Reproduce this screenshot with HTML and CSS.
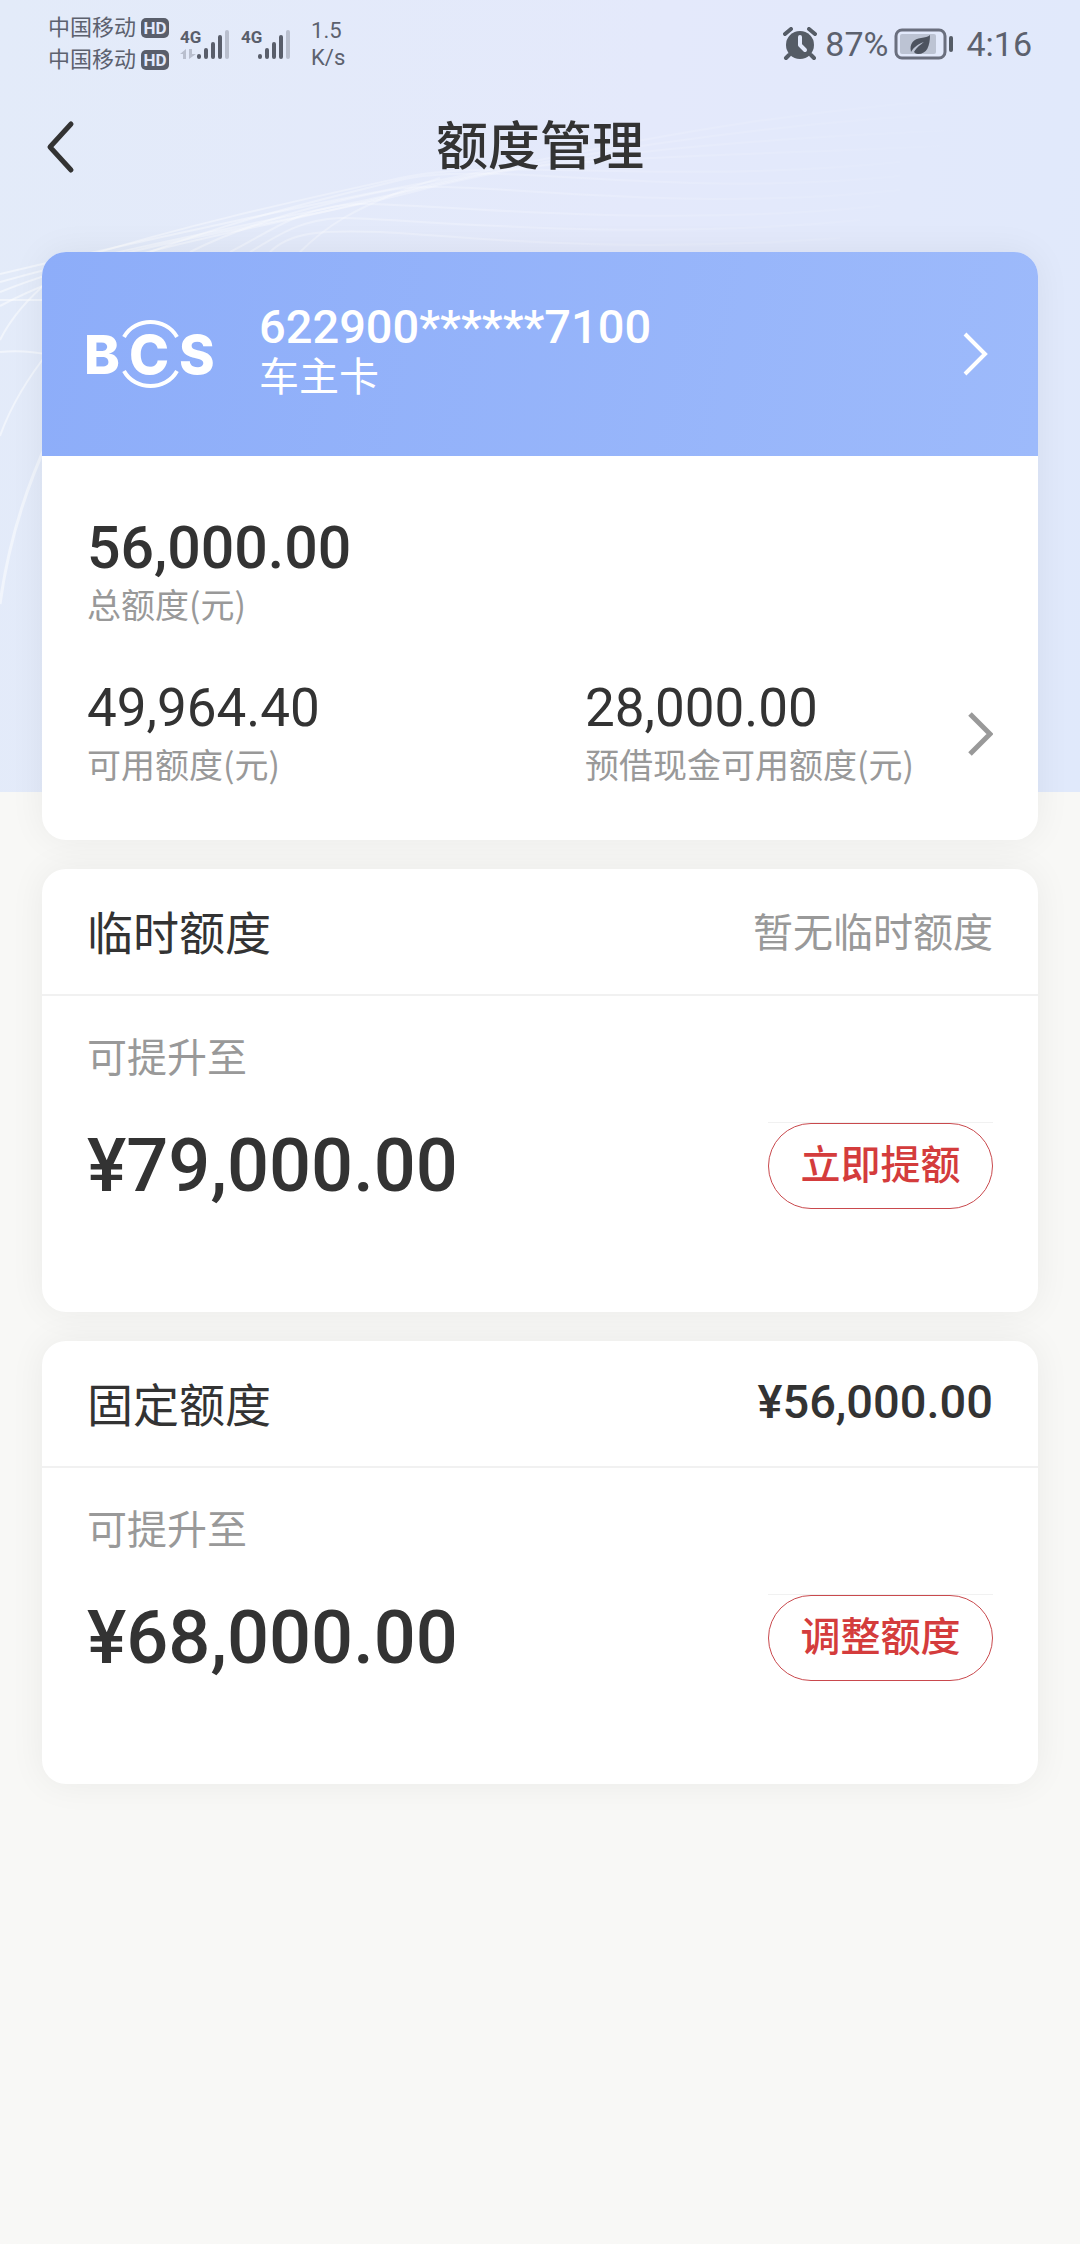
FILE: index.html
```html
<!DOCTYPE html>
<html lang="zh-CN">
<head>
  <meta charset="UTF-8">
  <meta name="viewport" content="width=device-width, initial-scale=1.0">
  <title>额度管理</title>
  <link rel="stylesheet" href="styles.css">
</head>
<body>
  <div class="page">
    <!-- Background waves -->
    <svg class="page-bg" viewBox="0 0 1080 792" preserveAspectRatio="xMinYMin slice" aria-hidden="true">
      <defs>
        <linearGradient id="wave" gradientUnits="userSpaceOnUse" x1="0" y1="0" x2="1000" y2="0">
          <stop offset="0" stop-color="#fff" stop-opacity="0.5"/>
          <stop offset="0.4" stop-color="#fff" stop-opacity="0.25"/>
          <stop offset="1" stop-color="#fff" stop-opacity="0"/>
        </linearGradient>
      </defs>
      <g fill="none" stroke="url(#wave)" stroke-width="2">
        <path d="M0 274 C160 236 330 200 440 180 S760 104 1080 92"/>
        <path d="M0 282 C150 240 320 212 430 186 S740 124 980 112"/>
        <path d="M0 292 C130 240 300 222 420 190 S720 140 960 130"/>
        <path d="M0 306 C110 246 290 226 410 190 S700 158 940 146"/>
        <path d="M60 264 C180 226 300 200 400 178 S660 186 900 162"/>
        <path d="M150 252 C230 222 310 202 400 180 S660 200 900 176"/>
        <path d="M190 252 C250 222 320 204 390 190 S660 216 900 190"/>
        <path d="M230 252 C270 232 300 206 360 204 S640 230 880 206"/>
        <path d="M250 252 C280 234 300 220 340 218 S620 244 860 220"/>
        <path d="M270 252 C290 232 320 230 380 232 S600 256 840 238"/>
        <path d="M300 252 C320 232 350 206 440 178"/>
        <path d="M0 300 H50"/>
        <path d="M0 352 C20 350 36 352 50 355"/>
        <path d="M0 340 C10 320 26 300 50 280"/>
        <path d="M0 436 C10 408 26 380 50 350"/>
        <path d="M0 604 C6 560 20 500 50 436" stroke-width="3"/>
      </g>
    </svg>

    <!-- Status Bar -->
    <div class="status-bar">
      <div class="status-left">
        <div class="carriers">
          <span class="carrier">中国移动<b class="hd">HD</b></span>
          <span class="carrier">中国移动<b class="hd">HD</b></span>
        </div>
        <div class="signals">
          <svg width="52" height="36" viewBox="0 0 52 36" role="img" aria-label="4G">
            <text class="net" x="0" y="17">4G</text>
            <path d="M0 28L6 23V33H3V28ZM9 33V23H12V28H16Z" fill="#b9bfce"/>
            <g stroke="#595e6b" stroke-width="4" stroke-linecap="round">
              <path d="M19 30V31M26 24V31M33 18V31M40 11V31"/>
              <path d="M47 6V31" stroke="#b9bfce"/>
            </g>
          </svg>
          <svg width="52" height="36" viewBox="0 0 52 36" role="img" aria-label="4G">
            <text class="net" x="0" y="17">4G</text>
            <g stroke="#595e6b" stroke-width="4" stroke-linecap="round">
              <path d="M19 30V31M26 24V31M33 18V31M40 11V31"/>
              <path d="M47 6V31" stroke="#b9bfce"/>
            </g>
          </svg>
        </div>
        <div class="speed"><span>1.5</span><span>K/s</span></div>
      </div>
      <div class="status-right">
        <svg width="34" height="34" viewBox="0 0 34 34" aria-hidden="true">
          <circle cx="17" cy="18" r="14" fill="#555c66"/>
          <path d="M2 7L8 2M32 7L26 2M6 28L3 31M28 28L31 31" stroke="#555c66" stroke-width="4" stroke-linecap="round"/>
          <path d="M17 10V18L22 23" fill="none" stroke="#e2e9fb" stroke-width="4" stroke-linecap="round" stroke-linejoin="round"/>
        </svg>
        <span class="percent">87%</span>
        <svg width="60" height="32" viewBox="0 0 60 32" aria-hidden="true">
          <rect x="2" y="2" width="49" height="28" rx="6" fill="none" stroke="#6a6f7e" stroke-width="3"/>
          <rect x="6" y="6" width="36" height="20" rx="2" fill="#bcc3d3"/>
          <rect x="55" y="8" width="4" height="16" rx="2" fill="#555c66"/>
          <path d="M36 7C36 18 33 26 24 26C22 26 21 25 20 24C23 19 26 17 30 14C24 16 20 19 17 24C15 15 20 11 27 10C31 9 34 9 36 7Z" fill="#4d535f"/>
        </svg>
        <span class="clock">4:16</span>
      </div>
    </div>

    <!-- Title Bar -->
    <header class="title-bar">
      <button class="back-btn" type="button" aria-label="返回">
        <svg width="30" height="54" viewBox="0 0 30 54"><path d="M26 4L5 27L26 50"/></svg>
      </button>
      <h1>额度管理</h1>
    </header>

    <main class="content">
      <!-- Card and total limits -->
      <section class="card">
        <a class="bank-card" href="#card">
          <svg class="logo" width="138" height="72" viewBox="-6 0 138 72" role="img" aria-label="BCS">
            <path d="M37 19C48 -1 79 -1 90 19M37 53C48 73 79 73 90 53" fill="none" stroke="#fff" stroke-width="4"/>
            <g class="logo-text">
              <text x="-3" y="56">B</text>
              <text x="42" y="56">C</text>
              <text x="92" y="56">S</text>
            </g>
          </svg>
          <span class="bank-info">
            <span class="bank-number">622900******7100</span>
            <span class="bank-name">车主卡</span>
          </span>
          <svg class="arrow arrow-light" width="28" height="48" viewBox="0 0 28 48"><path d="M3 4L23 24L3 44"/></svg>
        </a>
        <div class="limits">
          <div class="limit limit-total">
            <div class="limit-text">
              <strong class="value">56,000.00</strong>
              <span class="label">总额度(元)</span>
            </div>
          </div>
          <div class="limit-row">
            <div class="limit">
              <div class="limit-text">
                <span class="value">49,964.40</span>
                <span class="label">可用额度(元)</span>
              </div>
            </div>
            <a class="limit" href="#cash">
              <span class="limit-text">
                <span class="value">28,000.00</span>
                <span class="label">预借现金可用额度(元)</span>
              </span>
              <svg class="arrow" width="28" height="54" viewBox="0 0 28 54"><path d="M5 10L25 30L5 50"/></svg>
            </a>
          </div>
        </div>
      </section>

      <!-- Temporary limit -->
      <section class="card">
        <div class="card-head">
          <h2>临时额度</h2>
          <span class="none">暂无临时额度</span>
        </div>
        <div class="card-body">
          <p class="hint">可提升至</p>
          <div class="raise">
            <span class="amount">¥79,000.00</span>
            <div class="action"><button class="raise-btn" type="button">立即提额</button></div>
          </div>
        </div>
      </section>

      <!-- Fixed limit -->
      <section class="card">
        <div class="card-head">
          <h2>固定额度</h2>
          <span class="current">¥56,000.00</span>
        </div>
        <div class="card-body">
          <p class="hint">可提升至</p>
          <div class="raise">
            <span class="amount">¥68,000.00</span>
            <div class="action"><button class="raise-btn" type="button">调整额度</button></div>
          </div>
        </div>
      </section>
    </main>
  </div>
</body>
</html>
```
FILE: styles.css
```css
/* Reset default styles */
* {
  margin: 0;
  padding: 0;
  box-sizing: border-box;
}

body {
  font-family: "Noto Sans CJK SC", sans-serif;
  background-color: #f8f8f6;
  color: #333;
}

a {
  color: inherit;
  text-decoration: none;
}

button {
  font-family: inherit;
  background: none;
  border: none;
  cursor: pointer;
}

svg {
  display: block;
  flex-shrink: 0;
}

.page {
  position: relative;
  min-height: 100vh;
}

/* Background behind the bars and the first card */
.page-bg {
  position: absolute;
  top: 0;
  left: 0;
  z-index: -1;
  width: 100%;
  height: 792px;
  background: linear-gradient(100deg, #e3ebf9 0%, #e4e9fb 55%, #e0e9fb 100%);
}

/* Status bar */
.status-bar {
  display: flex;
  justify-content: space-between;
  align-items: center;
  height: 87px;
  padding: 0 48px;
  color: #5c616e;
  font-family: Roboto, "Noto Sans CJK SC", sans-serif;
}

.status-left,
.status-right,
.signals {
  display: flex;
  align-items: center;
}

.carriers {
  display: flex;
  flex-direction: column;
}

.carrier {
  display: flex;
  align-items: center;
  gap: 5px;
  font-size: 22px;
  line-height: 32px;
}

.hd {
  width: 28px;
  border-radius: 5px;
  background-color: #595e6b;
  color: #e2e9fb;
  font-size: 17px;
  line-height: 20px;
  text-align: center;
}

.signals {
  gap: 9px;
  margin-left: 11px;
}

.net {
  fill: #595e6b;
  font-size: 17px;
  font-weight: 700;
}

.speed {
  display: flex;
  flex-direction: column;
  margin-left: 18px;
  font-size: 22px;
  line-height: 27px;
}

.status-right {
  font-size: 34px;
}

.percent {
  margin: 0 6px 0 8px;
}

.clock {
  margin-left: 12px;
}

/* Title bar */
.title-bar {
  display: grid;
  grid-template-columns: 1fr auto 1fr;
  align-items: center;
  height: 119px;
  padding: 0 45px;
}

.title-bar h1 {
  padding-bottom: 8px;
  font-size: 52px;
  font-weight: 500;
  line-height: 72px;
}

.back-btn {
  justify-self: start;
}

.back-btn path {
  fill: none;
  stroke: #333;
  stroke-width: 5;
  stroke-linecap: round;
  stroke-linejoin: round;
}

/* Cards */
.content {
  display: flex;
  flex-direction: column;
  gap: 29px;
  padding: 46px 42px;
}

.card {
  overflow: hidden;
  border-radius: 24px;
  background-color: #fff;
  box-shadow: 0 0 36px rgba(0, 0, 0, 0.06);
}

.bank-card {
  display: flex;
  align-items: center;
  height: 204px;
  padding: 0 48px 0 39px;
  background: linear-gradient(100deg, #8dadf9, #9dbafb);
  color: #fff;
}

.logo-text {
  fill: #fff;
  font-family: Inter, sans-serif;
  font-size: 54px;
  font-weight: 800;
}

.bank-info {
  display: flex;
  flex-direction: column;
  flex: 1;
  padding: 0 0 6px 40px;
}

/* Figures */
.bank-number,
.value,
.current,
.amount {
  font-family: Roboto, "Noto Sans CJK SC", sans-serif;
}

.bank-number {
  font-size: 47px;
  font-weight: 500;
  line-height: 46px;
}

.bank-name {
  font-size: 40px;
  line-height: 48px;
}

.arrow path {
  fill: none;
  stroke: #999;
  stroke-width: 5;
}

.arrow-light path {
  stroke: #fff;
  stroke-width: 4;
}

/* Limits */
.limits {
  padding: 62px 0 56px;
}

.limit-row {
  display: grid;
  grid-template-columns: 1fr 1fr;
  margin-top: 54px;
}

.limit {
  display: flex;
  align-items: center;
  justify-content: space-between;
  padding: 0 45px;
}

.limit-text {
  display: flex;
  flex-direction: column;
  gap: 6px;
}

.value {
  font-size: 53px;
  line-height: 60px;
}

.limit-total .value {
  font-size: 59px;
  font-weight: 500;
}

.label {
  color: #999;
  font-size: 34px;
  line-height: 40px;
  white-space: nowrap;
}

/* Temporary and fixed limit cards */
.card-head {
  display: flex;
  align-items: center;
  justify-content: space-between;
  height: 127px;
  padding: 0 45px 4px;
  border-bottom: 2px solid #f1f1f1;
}

.card-head h2 {
  font-size: 46px;
  font-weight: 400;
}

.none {
  color: #999;
  font-size: 40px;
}

.current {
  font-size: 47px;
  font-weight: 500;
}

.card-body {
  padding: 35px 45px 103px;
}

.hint {
  color: #999;
  font-size: 40px;
  line-height: 48px;
}

.raise {
  display: flex;
  align-items: center;
  justify-content: space-between;
  margin-top: 43px;
}

.amount {
  font-size: 74px;
  font-weight: 500;
  line-height: 76px;
}

.action {
  border-top: 1px solid #f1f1f1;
}

.raise-btn {
  width: 225px;
  height: 86px;
  padding-bottom: 9px;
  border: 1px solid #c9494d;
  border-radius: 43px;
  color: #d43c3c;
  font-size: 40px;
  font-weight: 500;
}
```
